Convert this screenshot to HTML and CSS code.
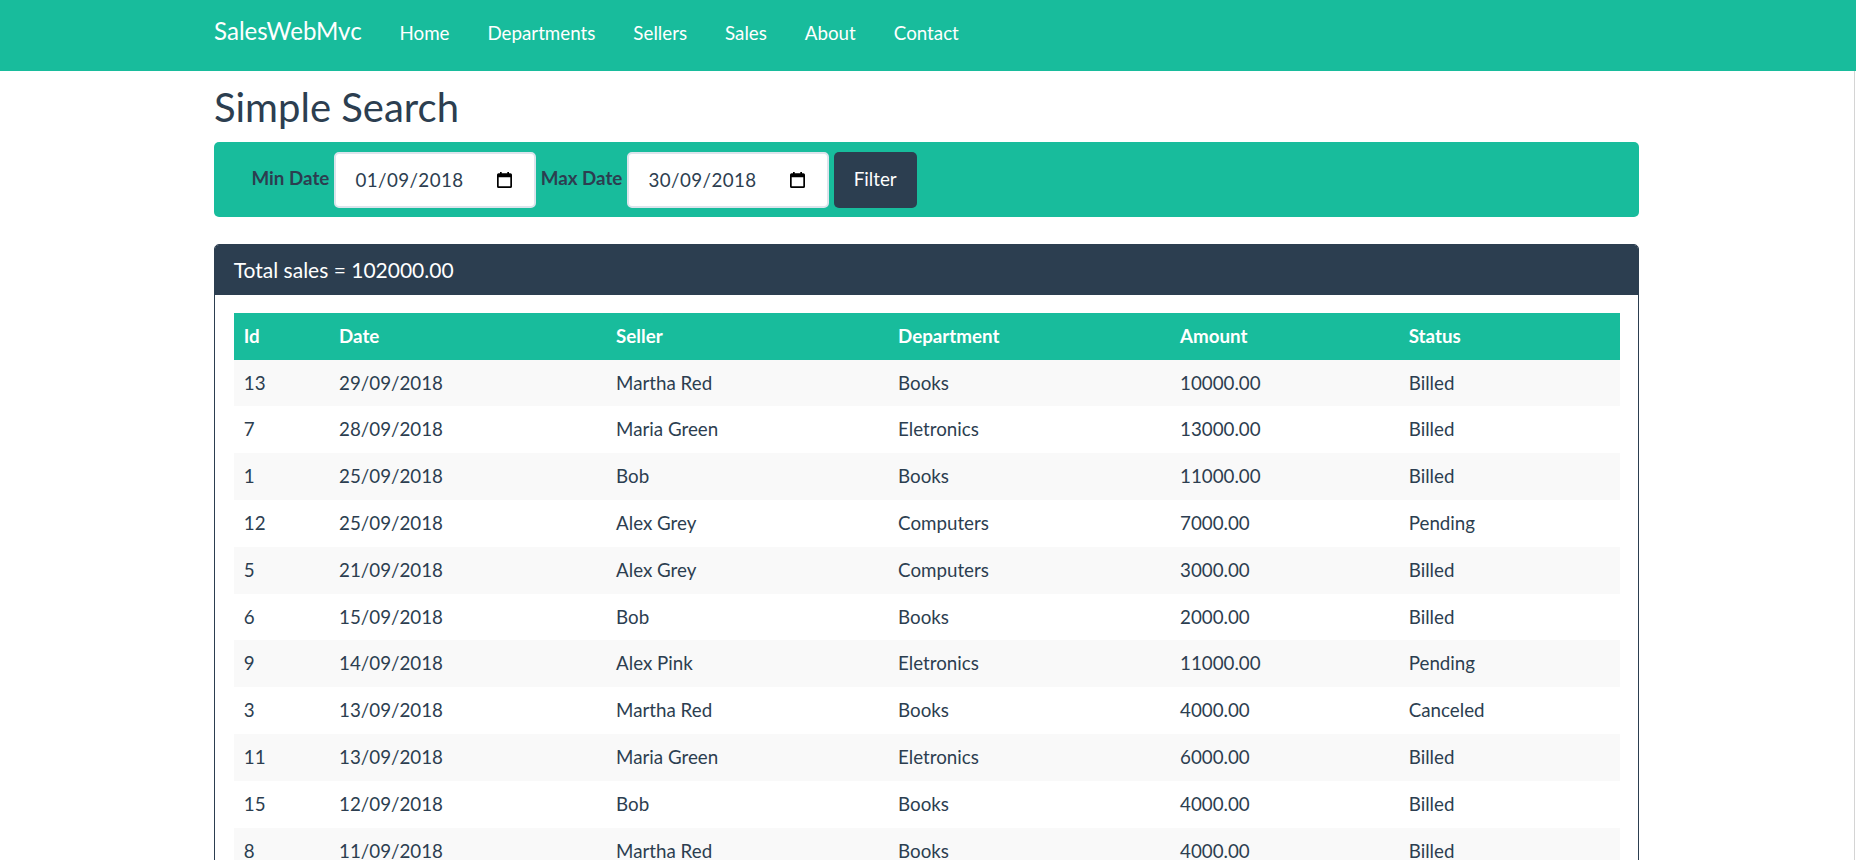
FILE: index.html
```html
<!DOCTYPE html>
<html lang="en">
<head>
<meta charset="utf-8">
<title>Simple Search - SalesWebMvc</title>
<link rel="stylesheet" href="styles.css">
</head>
<body>
<header class="topbar">
  <div class="container topbar-inner">
    <a class="brand" href="#">SalesWebMvc</a>
    <ul class="nav">
      <li><a href="#">Home</a></li>
      <li><a href="#">Departments</a></li>
      <li><a href="#">Sellers</a></li>
      <li><a href="#">Sales</a></li>
      <li><a href="#">About</a></li>
      <li><a href="#">Contact</a></li>
    </ul>
  </div>
</header>
<main class="container">
  <h2 class="title">Simple Search</h2>
  <form class="filterbar">
    <label class="flabel">Min Date</label>
    <div class="date">
      <span class="date-text">01/09/2018</span>
      <svg class="cal" width="15" height="16" viewBox="0 0 15 16"><path d="M3 0v1.2H1.6A1.6 1.6 0 0 0 0 2.8v11.6A1.6 1.6 0 0 0 1.6 16h11.8a1.6 1.6 0 0 0 1.6-1.6V2.8a1.6 1.6 0 0 0-1.6-1.6H12V0h-1.7v1.2H4.7V0zM1.7 5.2h11.6v9.1H1.7z" fill="#000"/></svg>
    </div>
    <label class="flabel">Max Date</label>
    <div class="date">
      <span class="date-text">30/09/2018</span>
      <svg class="cal" width="15" height="16" viewBox="0 0 15 16"><path d="M3 0v1.2H1.6A1.6 1.6 0 0 0 0 2.8v11.6A1.6 1.6 0 0 0 1.6 16h11.8a1.6 1.6 0 0 0 1.6-1.6V2.8a1.6 1.6 0 0 0-1.6-1.6H12V0h-1.7v1.2H4.7V0zM1.7 5.2h11.6v9.1H1.7z" fill="#000"/></svg>
    </div>
    <button type="button" class="btn">Filter</button>
  </form>
  <section class="panel">
    <div class="panel-heading">Total sales = 102000.00</div>
    <div class="panel-body">
      <table class="table">
        <thead>
          <tr>
            <th class="c-id">Id</th>
            <th class="c-date">Date</th>
            <th class="c-seller">Seller</th>
            <th class="c-dept">Department</th>
            <th class="c-amount">Amount</th>
            <th class="c-status">Status</th>
          </tr>
        </thead>
        <tbody>
          <tr><td>13</td><td>29/09/2018</td><td>Martha Red</td><td>Books</td><td>10000.00</td><td>Billed</td></tr>
          <tr><td>7</td><td>28/09/2018</td><td>Maria Green</td><td>Eletronics</td><td>13000.00</td><td>Billed</td></tr>
          <tr><td>1</td><td>25/09/2018</td><td>Bob</td><td>Books</td><td>11000.00</td><td>Billed</td></tr>
          <tr><td>12</td><td>25/09/2018</td><td>Alex Grey</td><td>Computers</td><td>7000.00</td><td>Pending</td></tr>
          <tr><td>5</td><td>21/09/2018</td><td>Alex Grey</td><td>Computers</td><td>3000.00</td><td>Billed</td></tr>
          <tr><td>6</td><td>15/09/2018</td><td>Bob</td><td>Books</td><td>2000.00</td><td>Billed</td></tr>
          <tr><td>9</td><td>14/09/2018</td><td>Alex Pink</td><td>Eletronics</td><td>11000.00</td><td>Pending</td></tr>
          <tr><td>3</td><td>13/09/2018</td><td>Martha Red</td><td>Books</td><td>4000.00</td><td>Canceled</td></tr>
          <tr><td>11</td><td>13/09/2018</td><td>Maria Green</td><td>Eletronics</td><td>6000.00</td><td>Billed</td></tr>
          <tr><td>15</td><td>12/09/2018</td><td>Bob</td><td>Books</td><td>4000.00</td><td>Billed</td></tr>
          <tr><td>8</td><td>11/09/2018</td><td>Martha Red</td><td>Books</td><td>4000.00</td><td>Billed</td></tr>
        </tbody>
      </table>
    </div>
  </section>
</main>
<div class="edge"></div>
</body>
</html>
```
FILE: styles.css
```css
* { box-sizing: border-box; }
html { overflow: hidden; }
html, body { margin: 0; padding: 0; }
body {
  font-family: Lato, "Noto Sans", sans-serif;
  font-size: 18.75px;
  line-height: 26.8px;
  color: #2C3E50;
  background: #fff;
}
.container {
  width: 1425px;
  margin-left: 214px;
}
.topbar {
  background: #18BC9C;
  height: 70.67px;
}
.topbar-inner {
  display: flex;
  align-items: baseline;
  padding-top: 18px;
}
.brand {
  color: #fff;
  text-decoration: none;
  font-size: 24.1px;
  line-height: 26.8px;
  padding-right: 18.75px;
}
.nav {
  display: flex;
  list-style: none;
  margin: 0;
  padding: 0;
}
.nav a {
  display: block;
  color: #fff;
  text-decoration: none;
  padding: 0 19px;
}
.title {
  font-size: 40px;
  line-height: 44px;
  font-weight: 400;
  margin: 14.7px 0 13.1px;
}
.filterbar {
  background: #18BC9C;
  border-radius: 5px;
  height: 75px;
  margin: 0;
  padding: 0 37.5px;
  display: flex;
  align-items: center;
  gap: 4.7px;
}
.flabel {
  font-weight: 700;
  margin-bottom: 2.5px;
}
.date {
  width: 202px;
  height: 56.7px;
  background: #fff;
  border: 2px solid #dce4ec;
  border-radius: 5px;
  display: flex;
  align-items: center;
  justify-content: space-between;
  padding: 0 22.5px 0 19.5px;
}
.date-text {
  letter-spacing: 0.4px;
}
.cal {
  display: block;
}
.btn {
  font: inherit;
  background: #2C3E50;
  color: #fff;
  border: none;
  border-radius: 5px;
  height: 56px;
  padding: 0 20px 1px;
}
.panel {
  margin-top: 26.3px;
  border: 1px solid #2C3E50;
  border-radius: 5px;
}
.panel-heading {
  background: #2C3E50;
  color: #fff;
  font-size: 21px;
  line-height: 23.4px;
  padding: 13px 18.75px 13.7px;
  border-radius: 4px 4px 0 0;
}
.panel-body {
  padding: 18px 18.75px 18.75px;
}
.table {
  width: 1386px;
  border-collapse: collapse;
  table-layout: fixed;
}
.table th,
.table td {
  padding: 10px;
  line-height: 26.8px;
  text-align: left;
}
.table thead tr {
  background: #18BC9C;
  color: #fff;
}
.table th { font-weight: 700; }
.table tbody tr:nth-child(odd) { background: #f9f9f9; }
.c-id { width: 95.3px; }
.c-date { width: 277px; }
.c-seller { width: 282px; }
.c-dept { width: 282px; }
.c-amount { width: 228.7px; }
.c-status { width: 221px; }
.edge {
  position: fixed;
  top: 71px;
  bottom: 0;
  right: 1px;
  width: 1px;
  background: #d4d4d4;
}
```
